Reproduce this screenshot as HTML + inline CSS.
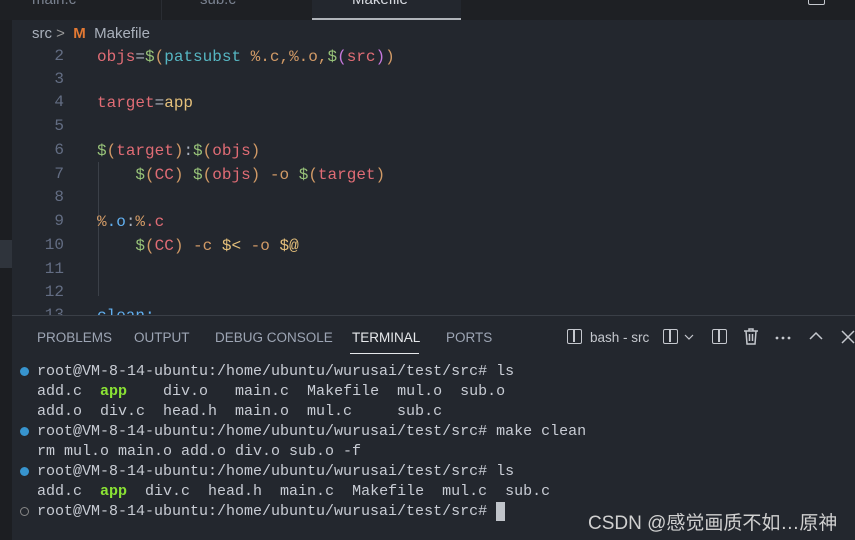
<!DOCTYPE html>
<html><head><meta charset="utf-8"><style>
*{margin:0;padding:0;box-sizing:border-box}
body{width:855px;height:540px;overflow:hidden;background:#23272e;position:relative;font-family:"Liberation Sans","Noto Sans CJK SC",sans-serif}
.abs{position:absolute;white-space:pre}
.mono{font-family:"Liberation Mono","DejaVu Sans Mono",monospace}
.code{font-size:16px;line-height:20px}
.term{font-size:15px;line-height:20px;color:#c8ccd4}
.r{color:#e06c75}.g{color:#98c379}.o{color:#d19a66}.y{color:#e5c07b}.c{color:#56b6c2}.p{color:#c678dd}.b{color:#61afef}.w{color:#abb2bf}
.ln{color:#636d83;font-size:16px;text-align:right;width:30px;left:34px}
.pt{font-size:13.5px;color:#9da5b4;top:330px}
</style></head><body>
<div class="abs" style="left:0;top:0;width:855px;height:20px;background:#1e2024"></div>
<div class="abs" style="left:0;top:20px;width:12px;height:520px;background:#1c1e22"></div>
<div class="abs" style="left:0;top:240px;width:12px;height:28px;background:#2f343c"></div>
<div class="abs" style="left:161px;top:0;width:1px;height:20px;background:#2a2d33"></div>
<div class="abs" style="left:312px;top:0;width:149px;height:20px;background:#23272e;border-bottom:2px solid #b0b4ba"></div>
<div class="abs" style="left:32px;top:-9px;font-size:15px;color:#7a8290">main.c</div>
<div class="abs" style="left:200px;top:-9px;font-size:15px;color:#7a8290">sub.c</div>
<div class="abs" style="left:352px;top:-9px;font-size:15px;color:#d7dae0">Makefile</div>
<div class="abs" style="left:808px;top:-6px;width:17px;height:11px;border:1.5px solid #c5c8ce;border-radius:2px"></div>
<div class="abs" style="left:32px;top:25px;font-size:15px;color:#a9b0bb">src <span style="color:#999">&gt;</span>  <b style="color:#e37933">M</b>  Makefile</div>
<div class="abs" style="left:98px;top:162px;width:1px;height:134px;background:#3b4048"></div>
<div class="abs mono ln" style="top:47px">2</div>
<div class="abs mono ln" style="top:70px">3</div>
<div class="abs mono ln" style="top:93px">4</div>
<div class="abs mono ln" style="top:117px">5</div>
<div class="abs mono ln" style="top:141px">6</div>
<div class="abs mono ln" style="top:165px">7</div>
<div class="abs mono ln" style="top:188px">8</div>
<div class="abs mono ln" style="top:212px">9</div>
<div class="abs mono ln" style="top:236px">10</div>
<div class="abs mono ln" style="top:260px">11</div>
<div class="abs mono ln" style="top:283px">12</div>
<div class="abs mono ln" style="top:306px">13</div>
<div class="abs mono code" style="left:97px;top:47px"><span class="r">objs</span><span class="w">=</span><span class="g">$</span><span class="o">(</span><span class="c">patsubst</span> <span class="o">%.c,%.o,</span><span class="g">$</span><span class="p">(</span><span class="r">src</span><span class="p">)</span><span class="o">)</span></div>
<div class="abs mono code" style="left:97px;top:93px"><span class="r">target</span><span class="w">=</span><span class="y">app</span></div>
<div class="abs mono code" style="left:97px;top:141px"><span class="g">$</span><span class="o">(</span><span class="r">target</span><span class="o">)</span><span class="w">:</span><span class="g">$</span><span class="o">(</span><span class="r">objs</span><span class="o">)</span></div>
<div class="abs mono code" style="left:97px;top:165px">    <span class="g">$</span><span class="o">(</span><span class="r">CC</span><span class="o">)</span> <span class="g">$</span><span class="o">(</span><span class="r">objs</span><span class="o">)</span> <span class="o">-o</span> <span class="g">$</span><span class="o">(</span><span class="r">target</span><span class="o">)</span></div>
<div class="abs mono code" style="left:97px;top:212px"><span class="o">%</span><span class="b">.o</span><span class="w">:</span><span class="o">%</span><span class="r">.c</span></div>
<div class="abs mono code" style="left:97px;top:236px">    <span class="g">$</span><span class="o">(</span><span class="r">CC</span><span class="o">)</span> <span class="o">-c</span> <span class="y">$&lt;</span> <span class="o">-o</span> <span class="y">$@</span></div>
<div class="abs mono code" style="left:97px;top:306px"><span class="b">clean:</span></div>
<div class="abs" style="left:12px;top:315px;width:843px;height:225px;background:#23272e;border-top:1px solid #3a3f47"></div>
<div class="abs pt" style="left:37px">PROBLEMS</div>
<div class="abs pt" style="left:134px">OUTPUT</div>
<div class="abs pt" style="left:215px">DEBUG CONSOLE</div>
<div class="abs pt" style="left:352px;color:#e6e8eb">TERMINAL</div>
<div class="abs" style="left:350px;top:353px;width:69px;height:1px;background:#e6e8eb"></div>
<div class="abs pt" style="left:446px">PORTS</div>
<div class="abs" style="left:567px;top:329px;width:15px;height:15px;border:1.5px solid #c5c8ce;border-radius:2px"><div style="position:absolute;left:5px;top:0;width:1.5px;height:12px;background:#c5c8ce"></div></div>
<div class="abs pt" style="left:590px;color:#c5c8ce">bash - src</div>
<div class="abs" style="left:663px;top:329px;width:15px;height:15px;border:1.5px solid #c5c8ce;border-radius:2px"><div style="position:absolute;left:5px;top:0;width:1.5px;height:12px;background:#c5c8ce"></div></div>
<svg class="abs" style="left:684px;top:334px" width="10" height="6" viewBox="0 0 10 6" fill="none" stroke="#c5c8ce" stroke-width="1.2"><path d="M1 1l4 4 4-4"/></svg>
<div class="abs" style="left:712px;top:329px;width:15px;height:15px;border:1.5px solid #c5c8ce;border-radius:2px"><div style="position:absolute;left:5px;top:0;width:1.5px;height:12px;background:#c5c8ce"></div></div>
<svg class="abs" style="left:743px;top:327px" width="16" height="18" viewBox="0 0 16 18" fill="none" stroke="#c5c8ce" stroke-width="1.5"><path d="M1 4h14M6 4V2h4v2M3 4l1 13h8l1-13M6.5 7v7M9.5 7v7"/></svg>
<svg class="abs" style="left:775px;top:336px" width="16" height="4" viewBox="0 0 16 4" fill="#c5c8ce"><circle cx="2" cy="2" r="1.4"/><circle cx="8" cy="2" r="1.4"/><circle cx="14" cy="2" r="1.4"/></svg>
<svg class="abs" style="left:809px;top:331px" width="14" height="9" viewBox="0 0 14 9" fill="none" stroke="#c5c8ce" stroke-width="1.5"><path d="M1 8l6-6 6 6"/></svg>
<svg class="abs" style="left:841px;top:330px" width="14" height="14" viewBox="0 0 14 14" fill="none" stroke="#c5c8ce" stroke-width="1.5"><path d="M1 1l12 12M13 1L1 13"/></svg>
<div class="abs" style="left:20px;top:367px;width:9px;height:9px;border-radius:50%;background:#3794ce"></div>
<div class="abs" style="left:20px;top:427px;width:9px;height:9px;border-radius:50%;background:#3794ce"></div>
<div class="abs" style="left:20px;top:467px;width:9px;height:9px;border-radius:50%;background:#3794ce"></div>
<div class="abs" style="left:20px;top:507px;width:9px;height:9px;border-radius:50%;border:1.5px solid #888"></div>
<div class="abs mono term" style="left:37px;top:362px">root@VM-8-14-ubuntu:/home/ubuntu/wurusai/test/src# ls
add.c  <b style="color:#8ae234">app</b>    div.o   main.c  Makefile  mul.o  sub.o
add.o  div.c  head.h  main.o  mul.c     sub.c
root@VM-8-14-ubuntu:/home/ubuntu/wurusai/test/src# make clean
rm mul.o main.o add.o div.o sub.o -f
root@VM-8-14-ubuntu:/home/ubuntu/wurusai/test/src# ls
add.c  <b style="color:#8ae234">app</b>  div.c  head.h  main.c  Makefile  mul.c  sub.c
root@VM-8-14-ubuntu:/home/ubuntu/wurusai/test/src# </div>
<div class="abs" style="left:496px;top:502px;width:9px;height:19px;background:#c0c4ca"></div>
<div class="abs" style="left:588px;top:508px;font-size:19px;color:#d0d0d0">CSDN @感觉画质不如…原神</div>
</body></html>
